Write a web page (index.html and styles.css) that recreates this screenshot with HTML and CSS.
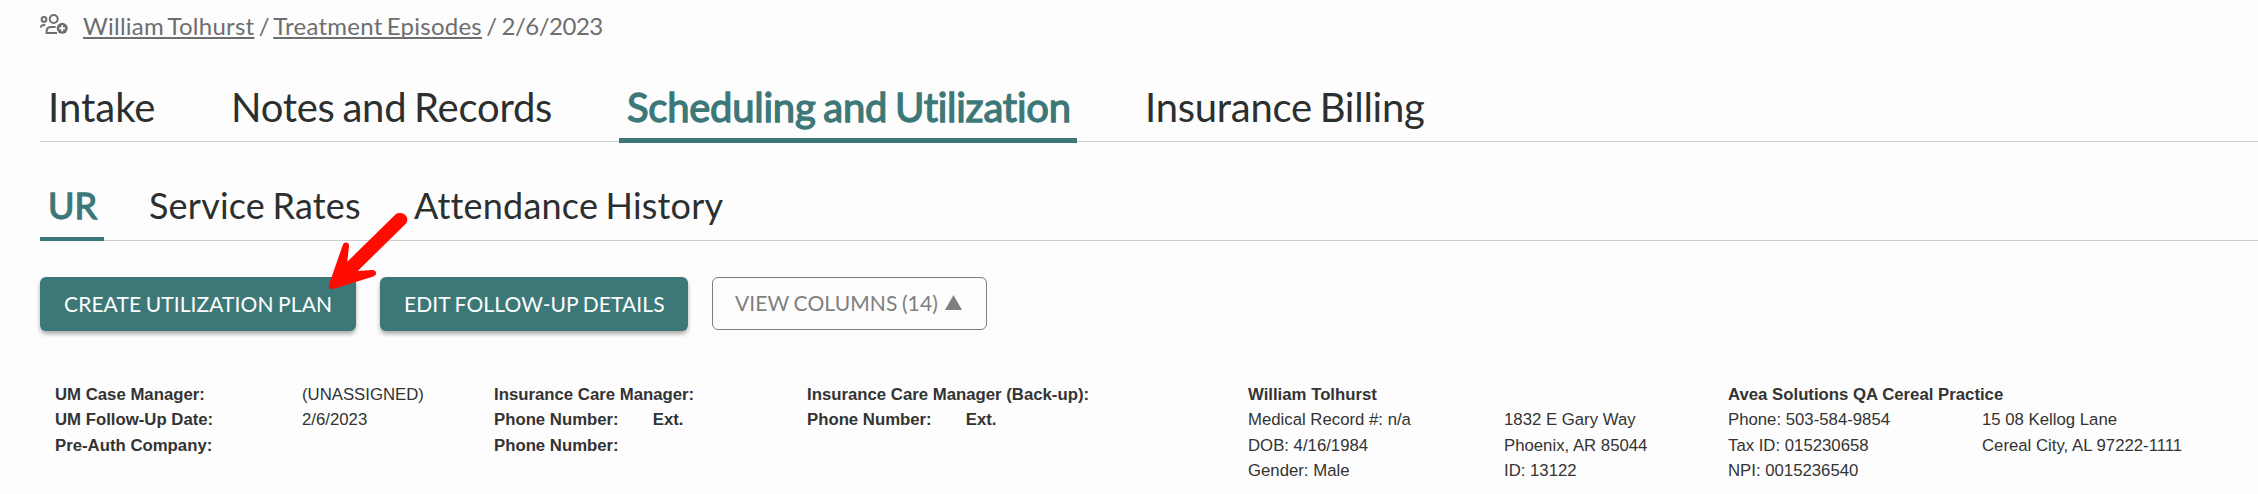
FILE: index.html
```html
<!DOCTYPE html>
<html lang="en">
<head>
<meta charset="utf-8">
<title>Scheduling and Utilization</title>
<link rel="stylesheet" href="styles.css">
</head>
<body>
<nav class="crumbs">
  <svg class="crumb-icon" viewBox="0 0 28 22" width="28" height="22" fill="none" stroke="#6e6e6e" stroke-width="2">
    <circle cx="4" cy="5.4" r="2.4"/>
    <circle cx="13.7" cy="5" r="4"/>
    <path d="M0.8 13.6C1 11.4 2.6 10.8 5.3 10.8M17 19H6.6V17.4C6.6 14.6 8.6 13 11.4 13H15.6"/>
    <circle cx="22.2" cy="14.3" r="5.5" fill="#6e6e6e" stroke="none"/>
    <path d="M22.2 11.3V17.3M19.2 14.3H25.2" stroke="#fdfdfd" stroke-width="1.8"/>
  </svg>
  <div class="crumb-text"><a>William Tolhurst</a> / <a>Treatment Episodes</a> / <span class="crumb-date">2/6/2023</span></div>
</nav>
<nav class="tabs">
  <a class="tab tab-intake">Intake</a>
  <a class="tab tab-notes">Notes and Records</a>
  <a class="tab tab-scheduling active">Scheduling and Utilization</a>
  <a class="tab tab-billing">Insurance Billing</a>
</nav>
<nav class="subtabs">
  <a class="subtab subtab-ur active">UR</a>
  <a class="subtab subtab-rates">Service Rates</a>
  <a class="subtab">Attendance History</a>
</nav>
<div class="actions">
  <button class="btn btn-create">CREATE UTILIZATION PLAN</button>
  <button class="btn btn-edit">EDIT FOLLOW-UP DETAILS</button>
  <button class="btn btn-outline"><span>VIEW COLUMNS (14)</span><svg width="17" height="15" viewBox="0 0 17 15"><path d="M8.500 0L17 15H0Z" fill="#7f7f7f"/></svg></button>
</div>
<main class="details">
  <div><b>UM Case Manager:</b><b>UM Follow-Up Date:</b><b>Pre-Auth Company:</b></div>
  <div><span>(UNASSIGNED)</span><span>2/6/2023</span></div>
  <div><b>Insurance Care Manager:</b><b class="phone"><span>Phone Number:</span><span>Ext.</span></b><b>Phone Number:</b></div>
  <div><b>Insurance Care Manager (Back-up):</b><b class="phone"><span>Phone Number:</span><span>Ext.</span></b></div>
  <div><b>William Tolhurst</b><span>Medical Record #: n/a</span><span>DOB: 4/16/1984</span><span>Gender: Male</span></div>
  <div class="below-title"><span>1832 E Gary Way</span><span>Phoenix, AR 85044</span><span>ID: 13122</span></div>
  <div><b>Avea Solutions QA Cereal Practice</b><span>Phone: 503-584-9854</span><span>Tax ID: 015230658</span><span>NPI: 0015236540</span></div>
  <div class="below-title"><span>15 08 Kellog Lane</span><span>Cereal City, AL 97222-1111</span></div>
</main>
<svg class="arrow" width="90" height="84" viewBox="0 0 90 84" fill="#ff0b00">
  <path d="M69.500 2.500C75 -2 85 4 80 11.500L31.700 59L46 58C51 58 51.500 63 47.300 64.500L8 76.700C4.500 77.500 2.500 75.500 3 72.500L16.800 33C18 29 23.500 30 23 34L21.300 49.700Z"/>
</svg>
</body>
</html>
```
FILE: styles.css
```css
* { box-sizing: border-box; }
body {
  margin: 0;
  height: 494px;
  overflow: hidden;
  position: relative;
  background: #fdfdfd;
  color: #2c2f2f;
  font-family: Lato, sans-serif;
  font-variant-ligatures: none;
}
.crumbs {
  display: flex;
  align-items: flex-start;
  height: 71px;
  padding: 11px 0 0 40px;
  color: #6e6e6e;
}
.crumb-icon { margin-top: 3px; margin-right: 15px; flex: none; }
.crumb-text { font-size: 24px; line-height: 29px; letter-spacing: .25px; word-spacing: -2.2px; white-space: nowrap; }
.crumb-text a { text-decoration: underline; text-decoration-thickness: 2px; text-underline-offset: 2px; text-decoration-skip-ink: none; }
.crumb-date { letter-spacing: -.5px; }
.tabs, .subtabs {
  display: flex;
  margin-left: 40px;
  white-space: nowrap;
}
.tabs {
  height: 72px;
  font-size: 40px;
  line-height: 72px;
  letter-spacing: -.25px;
  word-spacing: -2.2px;
  background: linear-gradient(#c9cece, #c9cece) no-repeat 0 70px / 100% 1px;
}
.tab { padding-left: 8px; }
.tab-intake { width: 183px; letter-spacing: 0; }
.tab-notes { width: 396px; }
.tab-scheduling { width: 458px; }
.tab-billing { margin-left: 60px; }
.active { color: #3d7878; -webkit-text-stroke: 1.3px #3d7878; }
.tab.active { border-bottom: 5px solid #3d7878; }
.subtabs {
  margin-top: 27px;
  height: 71px;
  font-size: 36px;
  line-height: 70px;
  letter-spacing: .2px;
  word-spacing: -2px;
  background: linear-gradient(#c9cece, #c9cece) no-repeat 0 70px / 100% 1px;
}
.subtab-ur { width: 64px; padding-left: 8px; }
.subtab-rates { width: 265px; margin-left: 45px; }
.subtab.active { border-bottom: 4px solid #3d7878; letter-spacing: 0; }
.actions { display: flex; padding: 36px 0 0 40px; gap: 24px; height: 141px; }
.btn {
  height: 54px;
  padding: 0 0 0 24px;
  border: 0;
  border-radius: 6px;
  font: 21px/54px Lato, sans-serif;
  letter-spacing: .1px;
  word-spacing: -1px;
  text-align: left;
  white-space: nowrap;
  color: #fff;
  background: #3d7878;
  box-shadow: 0 3px 4px rgba(0, 0, 0, .32);
}
.btn-create { width: 316px; }
.btn-edit { width: 308px; }
.btn-outline {
  display: flex;
  align-items: center;
  gap: 7px;
  width: 275px;
  height: 53px;
  padding: 0 0 2px 22px;
  border: 1px solid #7f7f7f;
  background: transparent;
  box-shadow: none;
  color: #7f7f7f;
  line-height: 51px;
}
.details {
  display: grid;
  grid-template-columns: 247px 192px 313px 441px 256px 224px 254px 1fr;
  padding-left: 55px;
  font: 16.75px/25.4px "Liberation Sans", Arial, sans-serif;
  color: #333;
  white-space: nowrap;
}
.details > div { display: flex; flex-direction: column; }
.details > .below-title { padding-top: 25.4px; }
.phone { display: flex; gap: 34px; }
.arrow { position: absolute; left: 326px; top: 212px; }
```
